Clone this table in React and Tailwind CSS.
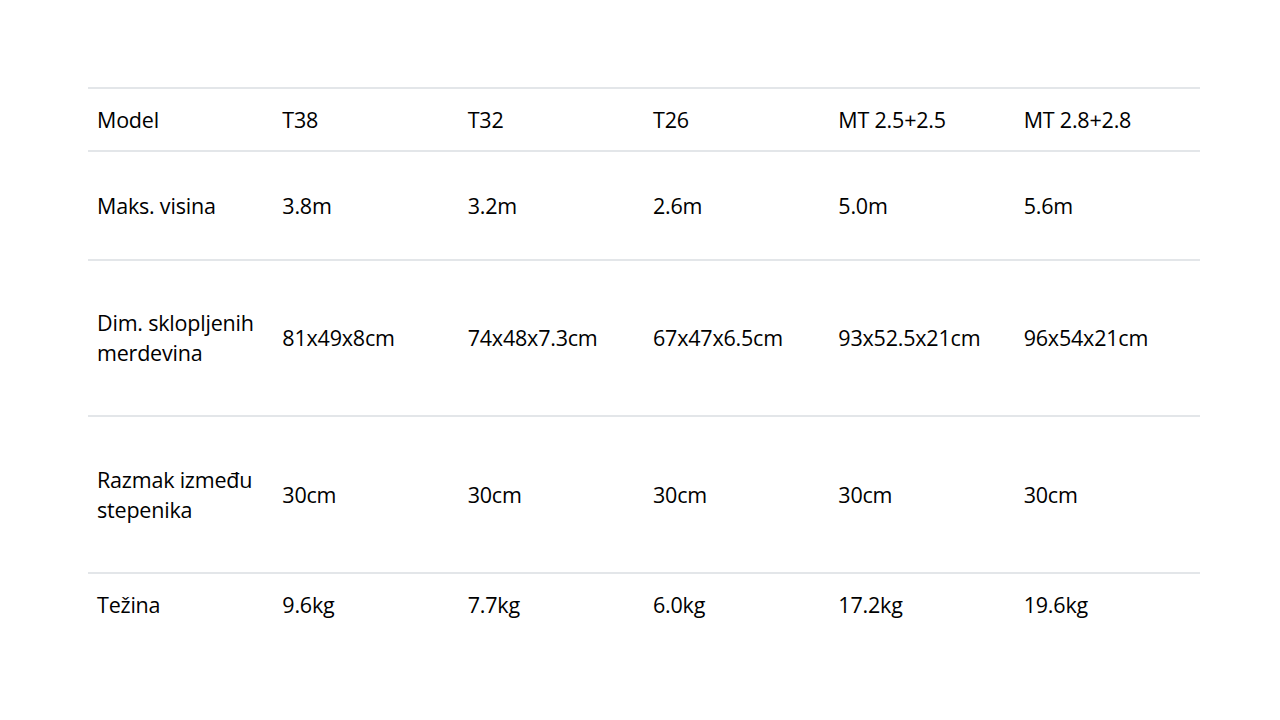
import React from 'react';

const rows = [
    { h: 'h-[63px]', cells: ['Model', 'T38', 'T32', 'T26', 'MT 2.5+2.5', 'MT 2.8+2.8'] },
    { h: 'h-[109px]', cells: ['Maks. visina', '3.8m', '3.2m', '2.6m', '5.0m', '5.6m'] },
    { h: 'h-[156px]', cells: ['Dim. sklopljenih merdevina', '81x49x8cm', '74x48x7.3cm', '67x47x6.5cm', '93x52.5x21cm', '96x54x21cm'] },
    { h: 'h-[157px]', cells: ['Razmak između stepenika', '30cm', '30cm', '30cm', '30cm', '30cm'] },
    { h: 'h-[64px]', cells: ['Težina', '9.6kg', '7.7kg', '6.0kg', '17.2kg', '19.6kg'] },
];

const App = () => {
    return (
        <div className="w-[1280px] h-[720px] bg-white pt-[87px] pl-[88px]" style={{ fontFamily: '"Open Sans", "Noto Sans", sans-serif' }}>
            <div className="w-[1112px]">
                {rows.map((row, i) => (
                    <div key={i} className={`grid grid-cols-6 items-center border-t-2 border-[#e3e6e9] ${row.h}`}>
                        {row.cells.map((c, j) => (
                            <div key={j} className="pl-[9px] pr-1 text-[21.5px] leading-[30px] text-black tracking-[-0.2px]">
                                {c}
                            </div>
                        ))}
                    </div>
                ))}
            </div>
        </div>
    );
};

export default App;
